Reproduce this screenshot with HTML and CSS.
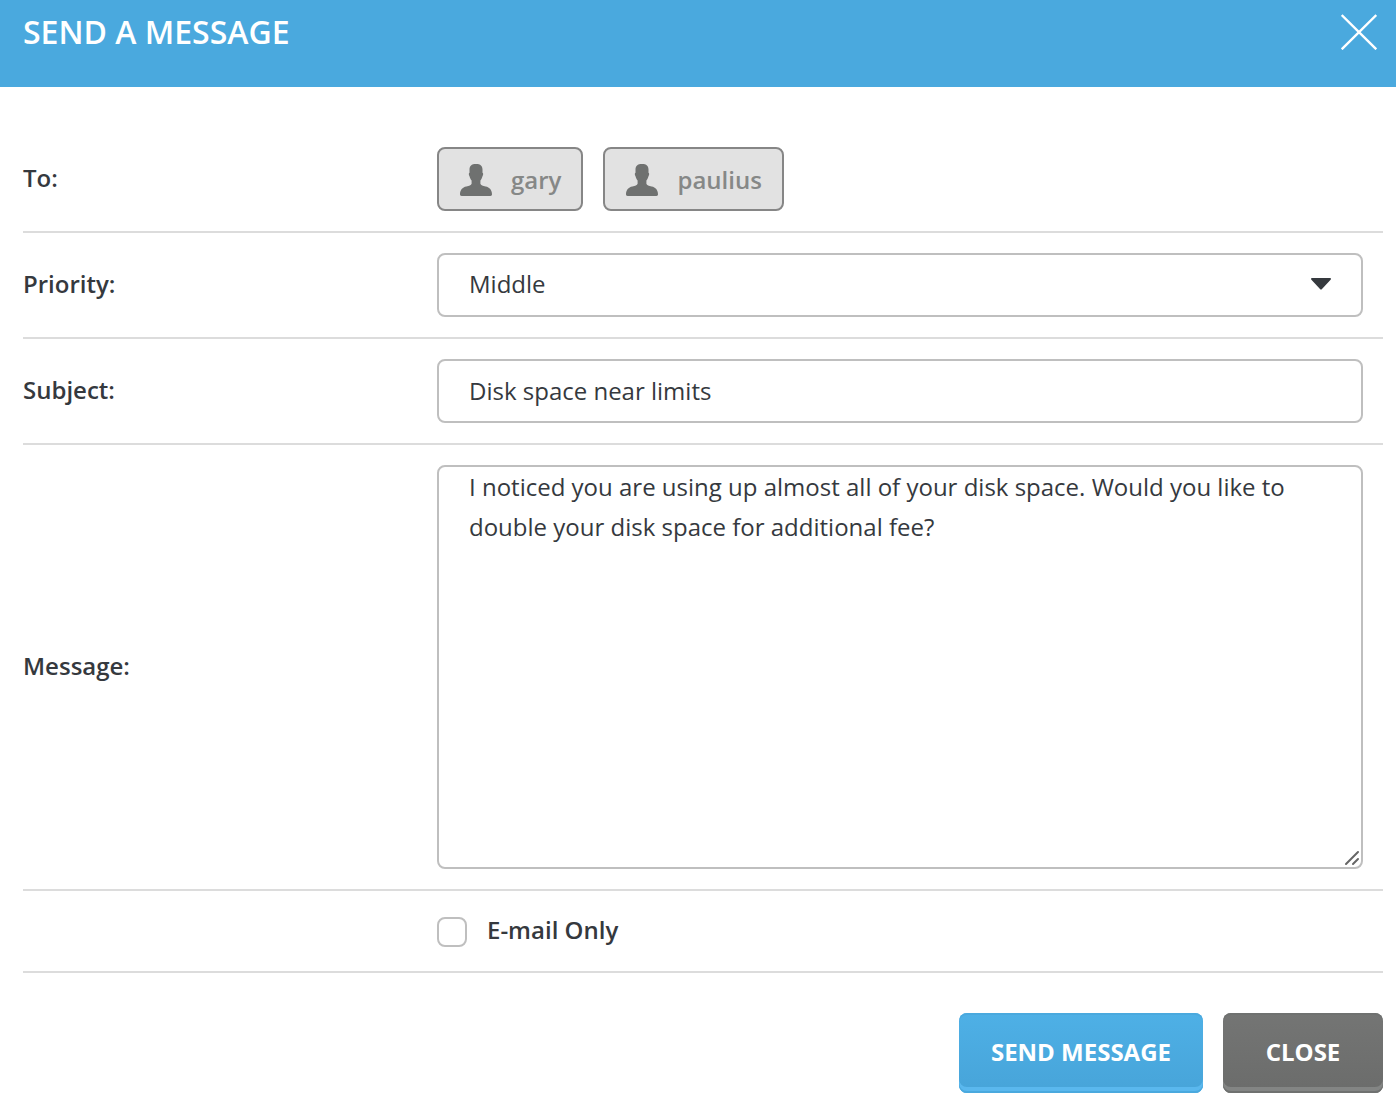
FILE: index.html
```html
<!DOCTYPE html>
<html lang="en">
<head>
  <meta charset="utf-8">
  <title>Send a message</title>
  <link rel="stylesheet" href="styles.css">
</head>
<body>
  <main class="dialog">
    <header class="dialog-header">
      <h1 class="dialog-title">SEND A MESSAGE</h1>
      <button class="dismiss" type="button" aria-label="Dismiss">
        <svg width="36" height="36" viewBox="0 0 36 36" fill="none" stroke="#fff" stroke-width="2.400"><path d="M.7 1l34.600 34.300M35.300 1L.7 35.300"/></svg>
      </button>
    </header>

    <form class="dialog-form">
      <div class="row">
        <span class="label" id="to-label">To:</span>
        <ul class="recipients" aria-labelledby="to-label">
          <li class="recipient">
            <svg class="person" width="32" height="32" viewBox="0 0 32 32"><path d="M16 0c4.600 0 6.500 2 6.500 5.600v3.200c1 .2.800 2.400-.1 3.600-.5 1.800-1.100 3-2 4v3.400c.5 1.400 2.400 2.200 5.200 2.600 4 .6 6.400 3.600 6.400 7.900 0 1.200-.5 1.700-1.700 1.700H1.700C.5 32 0 31.500 0 30.300c0-4.300 2.400-7.300 6.400-7.900 2.800-.4 4.700-1.200 5.200-2.600v-3.400c-.9-1-1.500-2.200-2-4-.9-1.200-1.100-3.400-.1-3.600V5.600C9.500 2 11.400 0 16 0z"/></svg>
            <span>gary</span>
          </li>
          <li class="recipient">
            <svg class="person" width="32" height="32" viewBox="0 0 32 32"><path d="M16 0c4.600 0 6.500 2 6.500 5.600v3.200c1 .2.800 2.400-.1 3.600-.5 1.800-1.100 3-2 4v3.400c.5 1.400 2.400 2.200 5.200 2.600 4 .6 6.400 3.600 6.400 7.900 0 1.200-.5 1.700-1.700 1.700H1.700C.5 32 0 31.500 0 30.300c0-4.300 2.400-7.300 6.400-7.900 2.800-.4 4.700-1.200 5.200-2.600v-3.400c-.9-1-1.500-2.200-2-4-.9-1.200-1.100-3.400-.1-3.600V5.600C9.500 2 11.400 0 16 0z"/></svg>
            <span>paulius</span>
          </li>
        </ul>
      </div>

      <div class="row">
        <label class="label" for="priority">Priority:</label>
        <div class="control">
          <select class="field" id="priority">
            <option>Low</option>
            <option selected>Middle</option>
            <option>High</option>
          </select>
          <svg class="arrow" width="20" height="12" viewBox="0 0 20 12"><path d="M1 0h18c1 0 1.300 1 .6 1.700L11 11c-.6.700-1.400.7-2 0L.4 1.700C-.3 1 0 0 1 0z"/></svg>
        </div>
      </div>

      <div class="row">
        <label class="label" for="subject">Subject:</label>
        <div class="control">
          <input class="field" id="subject" type="text" value="Disk space near limits">
        </div>
      </div>

      <div class="row">
        <label class="label" for="message">Message:</label>
        <div class="control">
          <textarea class="field message" id="message">I noticed you are using up almost all of your disk space. Would you like to double your disk space for additional fee?</textarea>
          <svg class="grip" width="16" height="16" viewBox="0 0 16 16"><path d="M2 14L14 2M9 14l5-5"/></svg>
        </div>
      </div>

      <div class="row">
        <label class="option">
          <input class="tick" type="checkbox">
          <span class="option-text">E-mail Only</span>
        </label>
      </div>

      <footer class="actions">
        <button class="button send" type="submit">SEND MESSAGE</button>
        <button class="button close" type="button">CLOSE</button>
      </footer>
    </form>
  </main>
</body>
</html>
```
FILE: styles.css
```css
* {
  box-sizing: border-box;
}

body {
  margin: 0;
  background: #fff;
  color: #35393e;
  font: 400 24px/40px "Open Sans", sans-serif;
}

svg {
  display: block;
}

.dialog-header {
  display: flex;
  justify-content: space-between;
  align-items: flex-start;
  height: 87px;
  padding: 12px 19px 0 23px;
  background: #4aa9de;
  color: #fff;
}

.dialog-title {
  margin: 0;
  font-size: 32px;
  font-weight: 600;
  line-height: 40px;
}

.dismiss {
  margin: 0;
  padding: 2px 0;
  border: 0;
  background: none;
  cursor: pointer;
}

.dialog-form {
  padding: 40px 13px 8px 23px;
}

.row {
  display: grid;
  grid-template-columns: 414px 1fr;
  align-items: center;
  padding: 20px 20px 20px 0;
  border-bottom: 2px solid #dcdcdc;
}

.label,
.option {
  font-weight: 600;
}

.label {
  padding-bottom: 2px;
}

.recipients {
  display: flex;
  gap: 20px;
  margin: 0;
  padding: 0;
  list-style: none;
}

.recipient {
  display: flex;
  align-items: center;
  gap: 19px;
  height: 64px;
  padding: 2px 20px 0 21px;
  border: 2px solid #868686;
  border-radius: 8px;
  background: #e2e2e2;
  color: #868887;
  font-weight: 600;
}

.person {
  fill: #6f7170;
}

.control {
  position: relative;
}

.field {
  display: block;
  width: 100%;
  height: 64px;
  margin: 0;
  padding: 0 30px 2px;
  border: 2px solid #bfbfbf;
  border-radius: 8px;
  background: #fff;
  color: inherit;
  font: inherit;
  appearance: none;
}

.message {
  height: 404px;
  resize: none;
}

.arrow {
  position: absolute;
  top: 25px;
  right: 32px;
  fill: #35393e;
  pointer-events: none;
}

.grip {
  position: absolute;
  right: 3px;
  bottom: 3px;
  fill: none;
  stroke: #666;
  stroke-width: 2;
  stroke-linecap: round;
  pointer-events: none;
}

.option {
  grid-column: 2;
  display: flex;
  align-items: center;
  gap: 20px;
  height: 40px;
}

.option-text {
  padding-bottom: 2px;
}

.tick {
  appearance: none;
  width: 30px;
  height: 30px;
  margin: 2px 0 0;
  border: 2px solid #bfbfbf;
  border-radius: 8px;
  background: #fff;
}

.actions {
  display: flex;
  justify-content: flex-end;
  gap: 20px;
  padding-top: 40px;
}

.button {
  height: 80px;
  margin: 0;
  padding: 0 32px 2px;
  border: 0;
  border-radius: 8px;
  color: #fff;
  font: inherit;
  font-weight: 700;
  cursor: pointer;
}

.send {
  background: linear-gradient(#4eb0e6, #47a4d9);
  box-shadow: inset 0 2px #4aa9de, inset 0 -2px #4aa9de, inset 0 -6px #5ab8ee;
}

.close {
  min-width: 160px;
  background: linear-gradient(#747574, #6b6c6b);
  box-shadow: inset 0 2px #6f7170, inset 0 -2px #6f7170, inset 0 -6px #838584;
}
```
